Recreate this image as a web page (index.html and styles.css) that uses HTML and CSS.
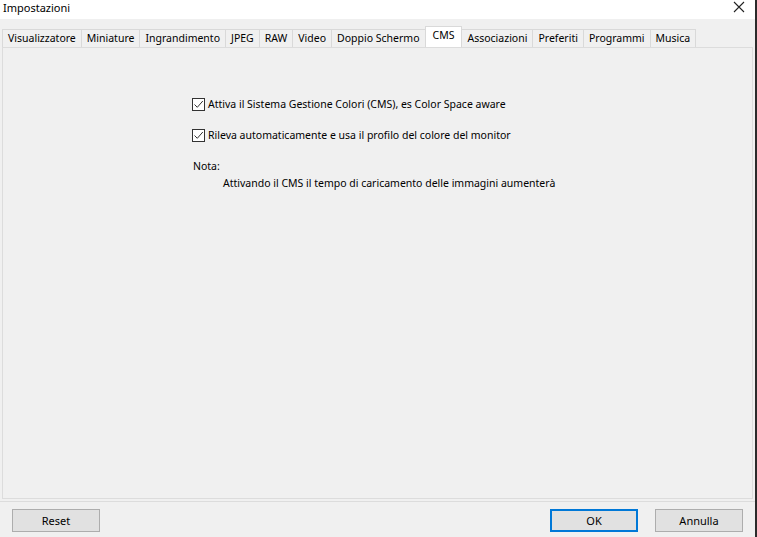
FILE: index.html
```html
<!DOCTYPE html>
<html lang="it">
<head>
  <meta charset="UTF-8">
  <title>Impostazioni</title>
  <link rel="stylesheet" href="styles.css">
</head>
<body>
<div class="window">
  <div class="titlebar">
    <span class="title">Impostazioni</span>
    <svg class="close" width="12" height="12" viewBox="0 0 12 12">
      <path d="M1 1 L11 11 M11 1 L1 11" stroke="#222" stroke-width="1.1" fill="none"/>
    </svg>
  </div>

  <div class="tabs">
    <div class="tab">Visualizzatore</div>
    <div class="tab">Miniature</div>
    <div class="tab">Ingrandimento</div>
    <div class="tab">JPEG</div>
    <div class="tab">RAW</div>
    <div class="tab">Video</div>
    <div class="tab">Doppio Schermo</div>
    <div class="tab active">CMS</div>
    <div class="tab">Associazioni</div>
    <div class="tab">Preferiti</div>
    <div class="tab">Programmi</div>
    <div class="tab">Musica</div>
  </div>

  <div class="panel">
    <div class="options">
      <label class="check">
        <span class="box"><svg width="11" height="11" viewBox="0 0 11 11"><path d="M1.5 5.5 L4.3 8.3 L9.8 2" stroke="#333" stroke-width="1" fill="none"/></svg></span>
        Attiva il Sistema Gestione Colori (CMS), es Color Space aware
      </label>
      <label class="check">
        <span class="box"><svg width="11" height="11" viewBox="0 0 11 11"><path d="M1.5 5.5 L4.3 8.3 L9.8 2" stroke="#333" stroke-width="1" fill="none"/></svg></span>
        Rileva automaticamente e usa il profilo del colore del monitor
      </label>
      <p class="note-label">Nota:</p>
      <p class="note">Attivando il CMS il tempo di caricamento delle immagini aumenterà</p>
    </div>
  </div>

  <div class="footer">
    <button class="btn">Reset</button>
    <div class="spacer"></div>
    <button class="btn default">OK</button>
    <button class="btn">Annulla</button>
  </div>
</div>
</body>
</html>
```

FILE: styles.css
```css
body {
  margin: 0;
  padding: 0;
  font-family: 'Segoe UI', 'Noto Sans', sans-serif;
  font-size: 10.5px;
  color: #000;
  background-color: #f0f0f0;
}

.window {
  width: 755px;
  height: 537px;
  border-right: 2px solid #2b2b2b;
  display: flex;
  flex-direction: column;
}

.titlebar {
  height: 19px;
  background-color: #fff;
  display: flex;
  justify-content: space-between;
  align-items: flex-start;
  padding: 0 10px 0 3px;
  font-size: 11px;
  line-height: 15px;
}

.close {
  margin-top: 1px;
}

.tabs {
  display: flex;
  align-items: flex-end;
  margin-top: 8px;
  padding-left: 2px;
  height: 20px;
}

.tab {
  height: 17px;
  line-height: 17px;
  padding: 0 5px;
  border: 1px solid #d9d9d9;
  border-bottom: none;
  border-right: none;
  background-color: #f0f0f0;
  white-space: nowrap;
}

.tab:nth-child(12) {
  border-right: 1px solid #d9d9d9;
}

.tab.active {
  height: 20px;
  line-height: 16px;
  padding: 0 7px;
  background-color: #fff;
  border-right: 1px solid #d9d9d9;
  margin-right: -1px;
  position: relative;
  z-index: 1;
}

.panel {
  margin: 0 2px 0 2px;
  height: 450px;
  border: 1px solid #dcdcdc;
  background-color: #f0f0f0;
}

.options {
  padding: 48px 0 0 189px;
}

.check {
  display: flex;
  align-items: center;
  height: 16px;
  margin-bottom: 15px;
}

.box {
  width: 11px;
  height: 11px;
  border: 1px solid #333;
  background-color: #fff;
  margin-right: 3px;
  display: flex;
}

.note-label {
  margin: 15px 0 0 1px;
  line-height: 16px;
}

.note {
  margin: 1px 0 0 31px;
  line-height: 16px;
}

.footer {
  margin-top: 2px;
  border-top: 1px solid #dcdcdc;
  display: flex;
  padding: 7px 12px 0 12px;
}

.spacer {
  flex: 1;
}

.btn {
  width: 88px;
  height: 23px;
  font-family: inherit;
  font-size: 11px;
  background-color: #e1e1e1;
  border: 1px solid #adadad;
  padding: 0;
  margin-left: 17px;
}

.btn:first-child {
  margin-left: 0;
}

.btn.default {
  border: 2px solid #0078d7;
}
```
